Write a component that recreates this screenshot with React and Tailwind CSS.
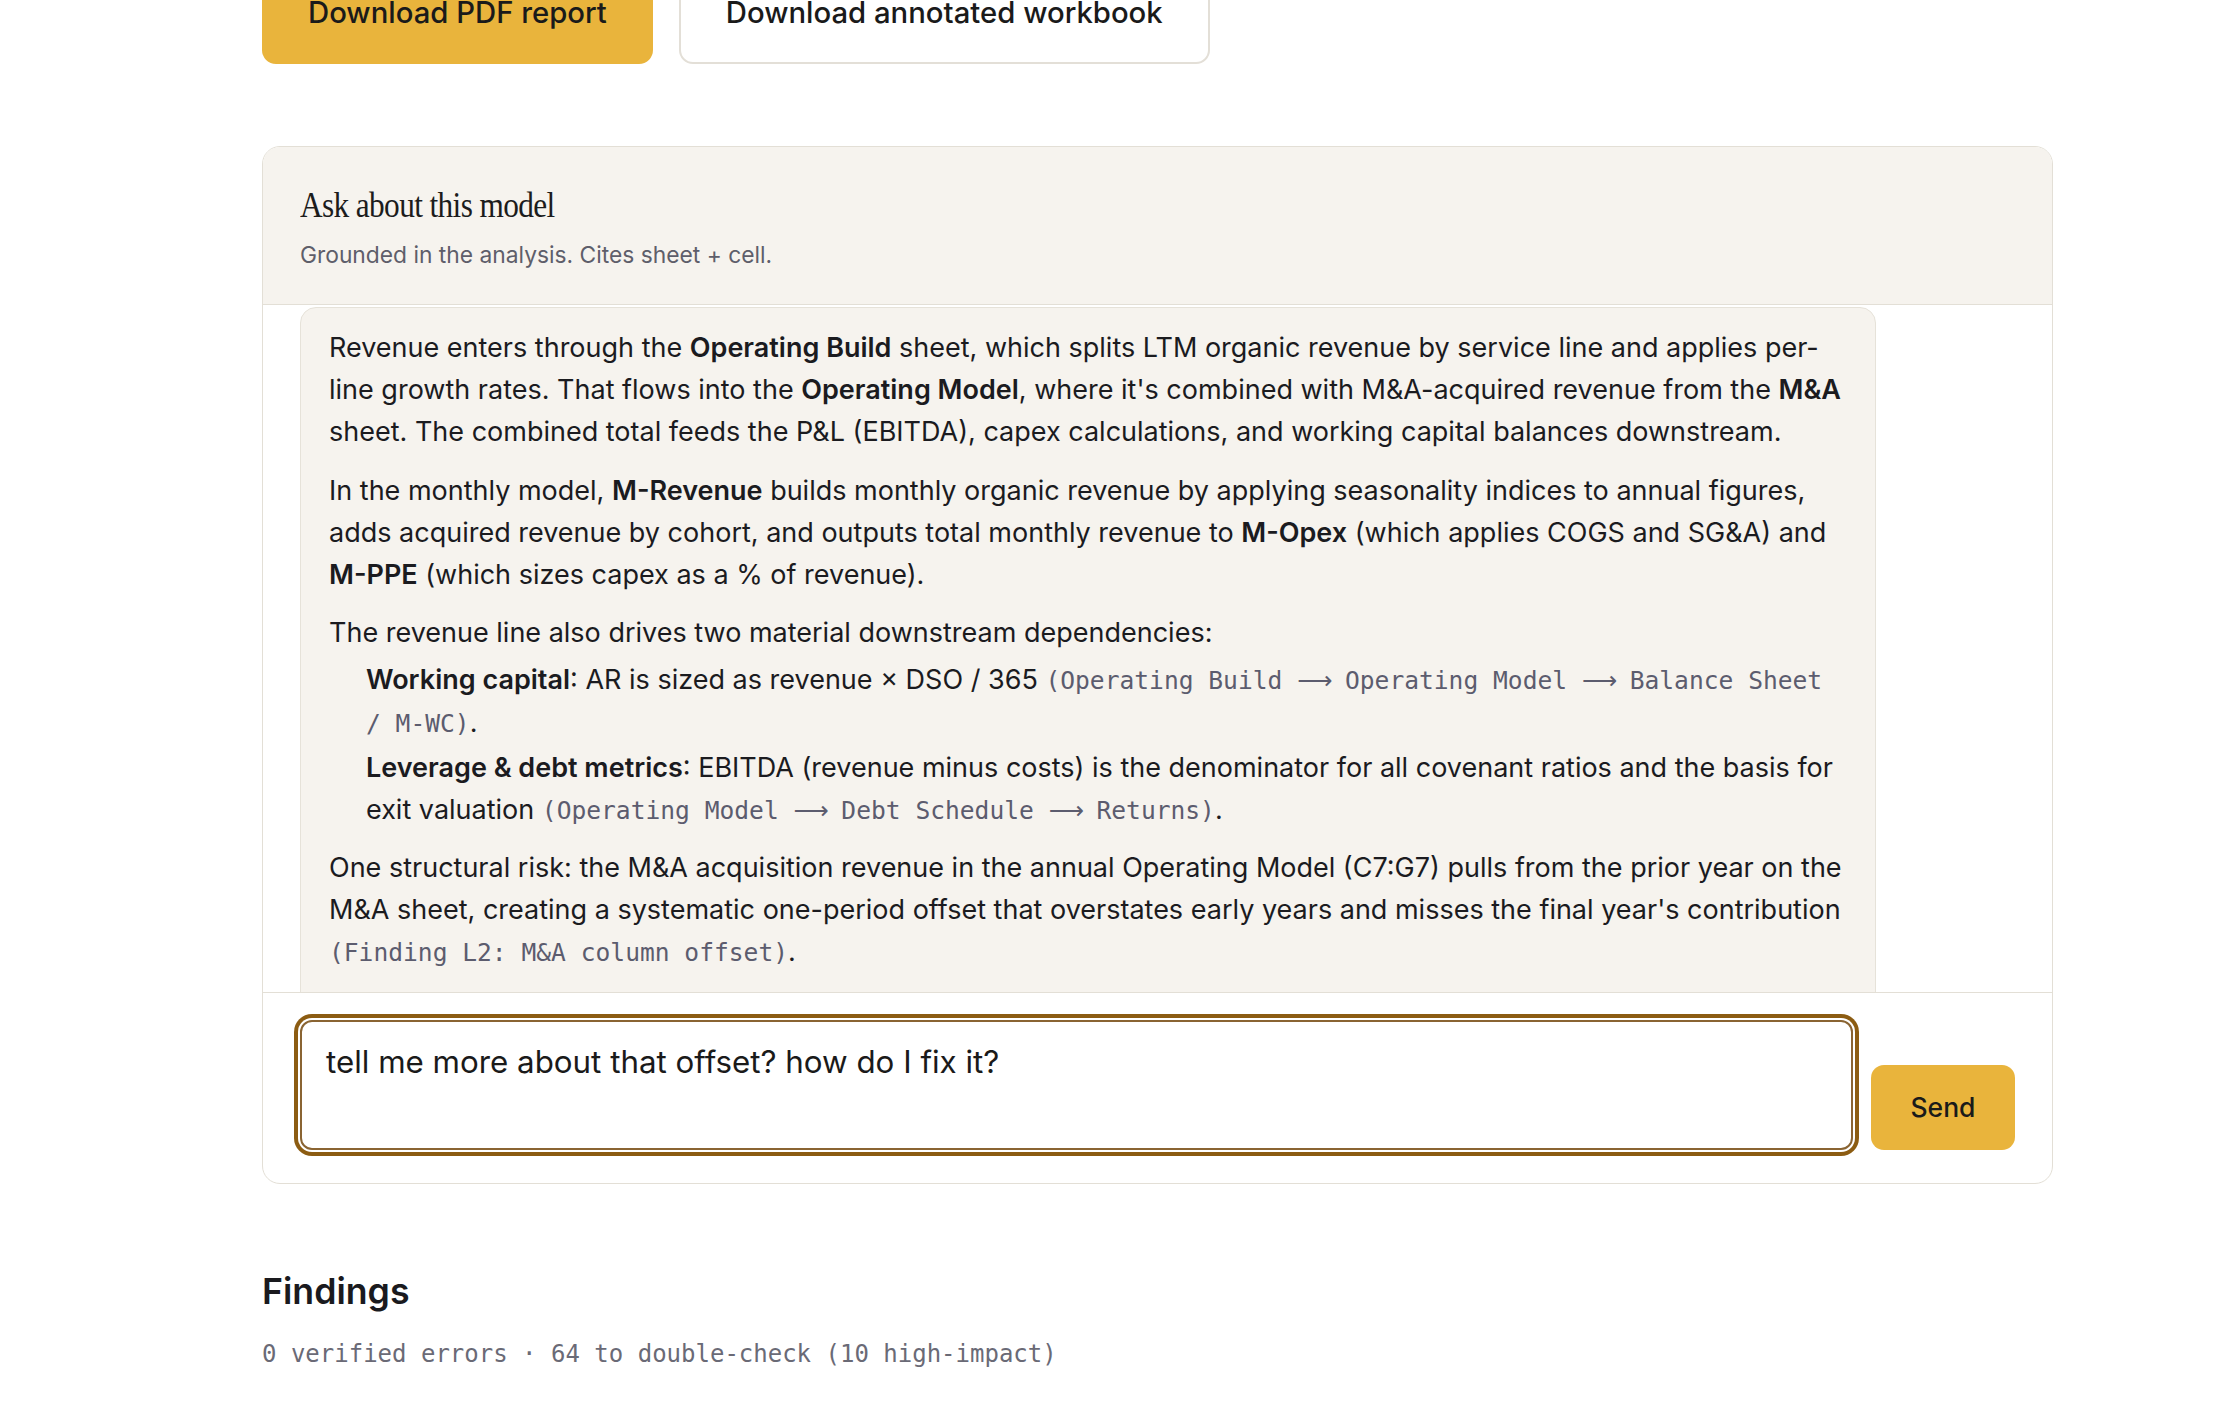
import React from "react";

const mono = "font-['DejaVu_Sans_Mono',monospace]";

function Arrow() {
  return (
    <span className="inline-block w-[33px] text-center font-['DejaVu_Sans',sans-serif]">⟶</span>
  );
}

function Code({ children }) {
  return (
    <span className={`${mono} text-[24.6px] text-[#5c5c6e]`}>{children}</span>
  );
}

export default function App() {
  return (
    <div className="min-h-screen bg-white overflow-hidden font-['Inter',sans-serif] text-[#1b1b1f]">
      <div className="pl-[262px] w-[2053px]">
        <div className="flex gap-[26px] -mt-[38px]">
          <button className="h-[102px] px-[46px] rounded-[14px] bg-[#e9b43c] text-[29.3px] font-medium text-[#1a1a1a]">
            Download PDF report
          </button>
          <button className="h-[102px] px-[45px] rounded-[14px] border-2 border-[#e3dfd7] bg-white text-[29.3px] font-medium text-[#1a1a1a]">
            Download annotated workbook
          </button>
        </div>

        <section className="mt-[82px] rounded-[18px] border border-[#e3dfd6] overflow-hidden bg-white">
          <header className="bg-[#f6f3ee] border-b border-[#e3dfd6] px-[37px] pt-[38px] pb-[33px]">
            <h3 className="origin-left scale-x-[0.87] font-['Liberation_Serif',serif] text-[36px] leading-[40px] tracking-[-0.02em] text-[#1c1c1c] whitespace-nowrap">
              Ask about this model
            </h3>
            <p className="mt-[14px] text-[22.8px] leading-[32px] text-[#5e5e6a]">
              Grounded in the analysis. Cites sheet + cell.
            </p>
          </header>

          <div className="h-[687px] overflow-hidden px-[37px] pt-[2px]">
            <div className="w-[1576px] rounded-t-[16px] border border-[#e6e2d9] bg-[#f6f3ee] pl-[28px] pr-[30px] pt-[19px] pb-[40px] text-[27px] leading-[42px]">
              <p>
                Revenue enters through the <b className="font-semibold">Operating Build</b> sheet, which splits LTM organic revenue by service line and applies per-line growth rates. That flows into the <b className="font-semibold">Operating Model</b>, where it's combined with M&amp;A-acquired revenue from the <b className="font-semibold">M&amp;A</b> sheet. The combined total feeds the P&amp;L (EBITDA), capex calculations, and working capital balances downstream.
              </p>
              <p className="mt-[17px]">
                In the monthly model, <b className="font-semibold">M-Revenue</b> builds monthly organic revenue by applying seasonality indices to annual figures, adds acquired revenue by cohort, and outputs total monthly revenue to <b className="font-semibold">M-Opex</b> (which applies COGS and SG&amp;A) and <b className="font-semibold">M-PPE</b> (which sizes capex as a % of revenue).
              </p>
              <p className="mt-[16px]">
                The revenue line also drives two material downstream dependencies:
              </p>
              <ul className="mt-[5px] pl-[37px]">
                <li>
                  <b className="font-semibold">Working capital</b>: AR is sized as revenue × DSO / 365{" "}
                  <Code>(Operating Build <Arrow /> Operating Model <Arrow /> Balance Sheet / M-WC)</Code>.
                </li>
                <li className="mt-[2px]">
                  <b className="font-semibold">Leverage &amp; debt metrics</b>: EBITDA (revenue minus costs) is the denominator for all covenant ratios and the basis for exit valuation{" "}
                  <Code>(Operating Model <Arrow /> Debt Schedule <Arrow /> Returns)</Code>.
                </li>
              </ul>
              <p className="mt-[15px]">
                One structural risk: the M&amp;A acquisition revenue in the annual Operating Model (C7:G7) pulls from the prior year on the M&amp;A sheet, creating a systematic one-period offset that overstates early years and misses the final year's contribution{" "}
                <Code>(Finding L2: M&amp;A column offset)</Code>.
              </p>
            </div>
          </div>

          <div className="border-t border-[#e3dfd6] flex items-end gap-[18px] px-[37px] pt-[27px] pb-[33px]">
            <textarea
              defaultValue="tell me more about that offset? how do I fix it?"
              className="flex-1 h-[130px] resize-none rounded-[12px] border-2 border-[#8a6432] bg-white pl-[24px] pt-[20px] text-[31.3px] leading-[40px] text-[#1a1a1a] outline-none ring-4 ring-[#8c5c12] ring-offset-2 ring-offset-white font-['Inter',sans-serif]"
            />
            <button className="w-[144px] h-[85px] rounded-[13px] bg-[#e9b43c] text-[26.5px] font-medium text-[#1a1a1a]">
              Send
            </button>
          </div>
        </section>

        <h2 className="mt-[85px] text-[35.7px] leading-[44px] font-semibold text-[#1a1a1e]">
          Findings
        </h2>
        <p className={`mt-[25px] ${mono} text-[24px] leading-[32px] text-[#6a6a76]`}>
          0 verified errors · 64 to double-check (10 high-impact)
        </p>
        <div className="h-[60px]" />
      </div>
    </div>
  );
}
